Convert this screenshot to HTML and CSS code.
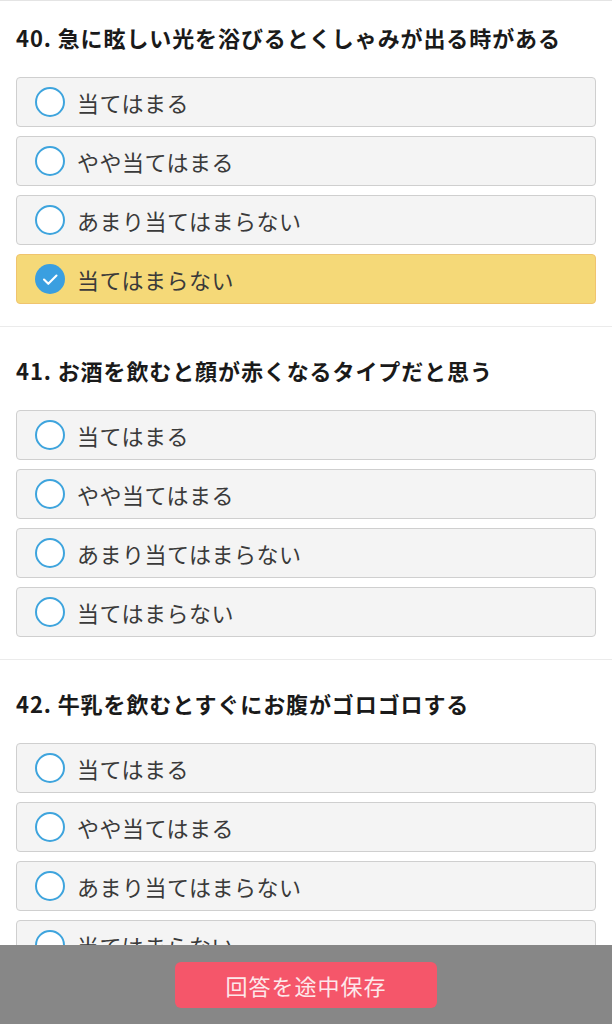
FILE: index.html
```html
<!DOCTYPE html>
<html lang="ja">
<head>
    <meta charset="UTF-8">
    <meta name="viewport" content="width=device-width, initial-scale=1.0">
    <title>アンケート</title>
    <link rel="stylesheet" href="styles.css">
</head>
<body>
    <div class="page">
        <div class="question">
            <h2 class="question-title">40. 急に眩しい光を浴びるとくしゃみが出る時がある</h2>
            <div class="options">
                <label class="option"><span class="radio"></span>当てはまる</label>
                <label class="option"><span class="radio"></span>やや当てはまる</label>
                <label class="option"><span class="radio"></span>あまり当てはまらない</label>
                <label class="option selected">
                    <span class="radio checked">
                        <svg viewBox="0 0 30 30" width="30" height="30"><polyline points="9,15.5 13.3,19.8 21.5,11.5" fill="none" stroke="#fff" stroke-width="2.1" stroke-linecap="round" stroke-linejoin="round"/></svg>
                    </span>当てはまらない
                </label>
            </div>
        </div>
        <div class="question">
            <h2 class="question-title">41. お酒を飲むと顔が赤くなるタイプだと思う</h2>
            <div class="options">
                <label class="option"><span class="radio"></span>当てはまる</label>
                <label class="option"><span class="radio"></span>やや当てはまる</label>
                <label class="option"><span class="radio"></span>あまり当てはまらない</label>
                <label class="option"><span class="radio"></span>当てはまらない</label>
            </div>
        </div>
        <div class="question">
            <h2 class="question-title">42. 牛乳を飲むとすぐにお腹がゴロゴロする</h2>
            <div class="options">
                <label class="option"><span class="radio"></span>当てはまる</label>
                <label class="option"><span class="radio"></span>やや当てはまる</label>
                <label class="option"><span class="radio"></span>あまり当てはまらない</label>
                <label class="option"><span class="radio"></span>当てはまらない</label>
            </div>
        </div>
    </div>

    <div class="save-bar">
        <button class="save-button" type="button">回答を途中保存</button>
    </div>
</body>
</html>
```

FILE: styles.css
```css
body {
    font-family: "Noto Sans CJK JP", "Noto Sans", sans-serif;
    background-color: #fff;
    color: #333;
    margin: 0;
    padding: 0;
}
.page {
    border-top: 1px solid #e4e4e4;
    padding-bottom: 120px;
}
.question {
    padding: 27px 16px 22px;
    border-bottom: 1px solid #ebebeb;
}
.question:first-child {
    padding-top: 20px;
}
.question-title {
    margin: 0 0 24px;
    font-size: 22px;
    line-height: 32px;
    font-weight: bold;
    color: #1a1a1a;
    letter-spacing: 0.9px;
}
.options {
    display: flex;
    flex-direction: column;
    gap: 9px;
}
.option {
    display: flex;
    align-items: center;
    gap: 12px;
    height: 50px;
    box-sizing: border-box;
    padding-left: 18px;
    background-color: #f4f4f4;
    border: 1px solid #cfcfcf;
    border-radius: 4px;
    font-size: 22px;
    color: #3a3a3a;
    letter-spacing: 0.5px;
}
.option.selected {
    background-color: #f5d978;
    border-color: #f0c46e;
}
.radio {
    width: 30px;
    height: 30px;
    box-sizing: border-box;
    border: 2px solid #3ea4dd;
    border-radius: 50%;
    flex-shrink: 0;
    background: #fff;
}
.radio.checked {
    border: none;
    background-color: #3a9fe0;
}
.radio svg {
    display: block;
}
.save-bar {
    position: fixed;
    left: 0;
    right: 0;
    bottom: 0;
    height: 79px;
    background-color: #878787;
    display: flex;
    justify-content: center;
    padding-top: 17px;
    box-sizing: border-box;
}
.save-button {
    width: 262px;
    height: 46px;
    border: none;
    border-radius: 6px;
    background-color: #f5566a;
    color: #fde8ea;
    font-family: "Noto Sans CJK JP", "Noto Sans", sans-serif;
    font-size: 22px;
    letter-spacing: 1px;
    cursor: pointer;
}
```
